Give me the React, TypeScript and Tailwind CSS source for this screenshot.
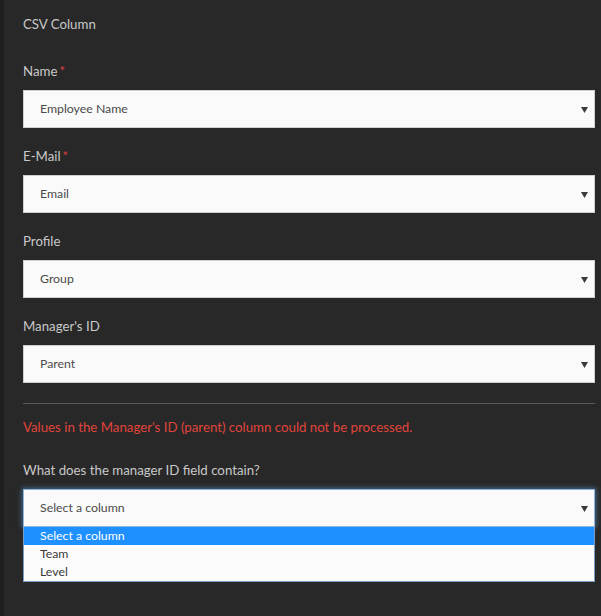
function Arrow() {
  return (
    <svg width="7" height="6" viewBox="0 0 7 6" className="shrink-0">
      <path d="M0 0 L7 0 L3.5 6 Z" fill="#3a3a3a" />
    </svg>
  );
}

function SelectBox({ value, focused = false }: { value: string; focused?: boolean }) {
  return (
    <div
      className={
        focused
          ? "flex h-[38px] items-center justify-between border border-[#8fb3d9] bg-[#fafafa] pl-4 pr-[6px] pt-px text-[12.3px] text-[#4a4a4a] shadow-[0_0_5px_1px_rgba(90,160,230,0.55)]"
          : "flex h-[38px] items-center justify-between border border-[#d0d0d0] bg-[#fafafa] pl-4 pr-[6px] pt-px text-[12.3px] text-[#4a4a4a]"
      }
    >
      <span>{value}</span>
      <Arrow />
    </div>
  );
}

function Field({ label, value, required = false }: { label: string; value: string; required?: boolean }) {
  return (
    <div className="mt-[18px] first:mt-0">
      <div className="mb-[9px] h-5 leading-5 text-[13.25px] text-[#c9c9c9]">
        {label}
        {required && <span className="ml-[2px] text-[#d9423a]">*</span>}
      </div>
      <SelectBox value={value} />
    </div>
  );
}

export default function App() {
  return (
    <main
      className="min-h-[616px] border-l-4 border-[#1f1f1f] bg-[#282828] pl-[19px] pr-[6px] pt-[14px]"
      style={{ fontFamily: "Lato, 'Open Sans', sans-serif" }}
    >
      <div className="h-5 leading-5 text-[13.25px] text-[#c9c9c9]">CSV Column</div>

      <div className="mt-[27px]">
        <Field label="Name" value="Employee Name" required />
        <Field label="E-Mail" value="Email" required />
        <Field label="Profile" value="Group" />
        <Field label="Manager's ID" value="Parent" />
      </div>

      <div className="mt-5 h-px bg-[#5a5a5a]" />

      <div className="mt-[13px] h-5 leading-5 text-[13.25px] text-[#e0443c]">
        Values in the Manager's ID (parent) column could not be processed.
      </div>

      <div className="mt-[23px] mb-[9px] h-5 leading-5 text-[13.25px] text-[#c9c9c9]">
        What does the manager ID field contain?
      </div>

      <SelectBox value="Select a column" focused />
      <ul className="border border-t-0 border-[#7a9cc6] bg-[#fcfcfc] text-[12.3px] text-[#3a3a3a]">
        <li className="h-[18px] bg-[#1e90ff] pl-4 leading-[18px] text-white">Select a column</li>
        <li className="h-[18px] pl-4 leading-[18px]">Team</li>
        <li className="h-[18px] pl-4 leading-[18px]">Level</li>
      </ul>
    </main>
  );
}
